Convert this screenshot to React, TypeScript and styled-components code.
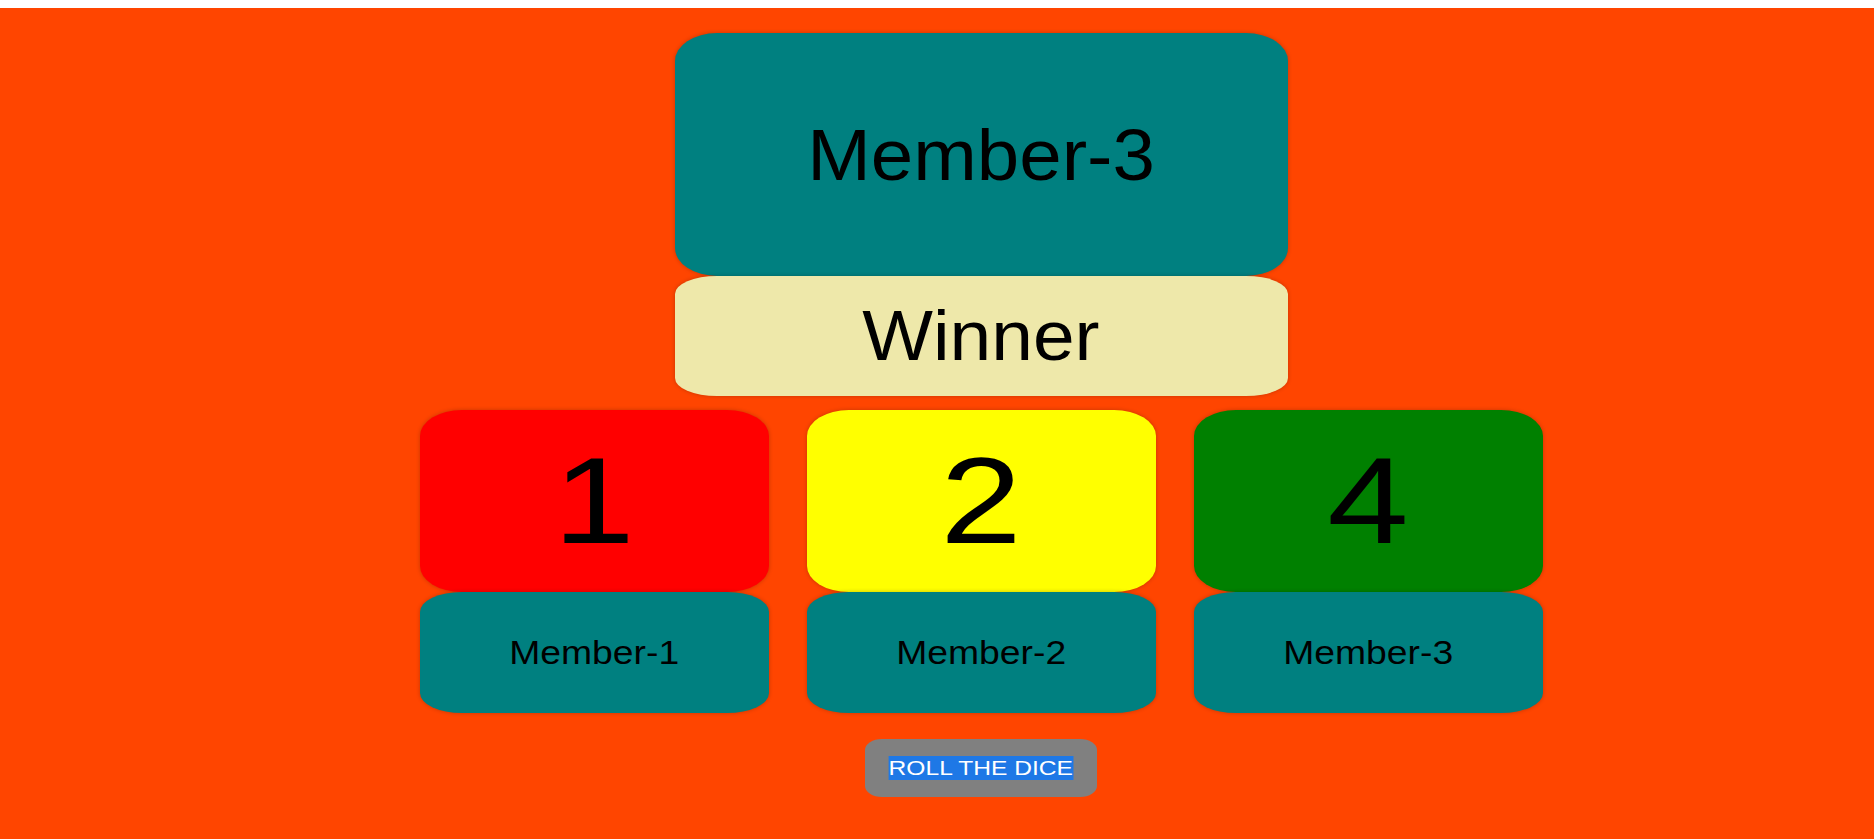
import React from "react";
import styled, { createGlobalStyle } from "styled-components";

const Global = createGlobalStyle`
  html, body { margin: 0; padding: 0; background: #ffffff; }
  body { font-family: "Liberation Sans", Arial, sans-serif; }
`;

const Page = styled.div`
  padding-top: 8px;
  background: #ffffff;
`;

const Stage = styled.main`
  min-height: 831px;
  background: #ff4500;
  box-sizing: border-box;
  padding: 25px 0 0 88px;
  display: flex;
  flex-direction: column;
  align-items: center;
`;

const WinnerCard = styled.section`
  width: 613px;
  display: flex;
  flex-direction: column;
`;

const Box = styled.div<{ $bg: string; $h: number; $ry: number }>`
  height: ${(p) => p.$h}px;
  background: ${(p) => p.$bg};
  border-radius: 42px / ${(p) => p.$ry}px;
  display: flex;
  align-items: center;
  justify-content: center;
  color: #000;
  box-shadow: 0 0 4px rgba(0, 0, 0, 0.22);
`;

const Label = styled.span<{ $size: number; $sx?: number }>`
  font-size: ${(p) => p.$size}px;
  line-height: 1;
  display: inline-block;
  transform: scaleX(${(p) => p.$sx ?? 1});
`;

const DiceRow = styled.div`
  margin-top: 14px;
  display: flex;
  gap: 38px;
`;

const Column = styled.div`
  width: 349px;
  display: flex;
  flex-direction: column;
`;

const RollButton = styled.button`
  margin-top: 26px;
  width: 232px;
  height: 58px;
  border: none;
  background: #808080;
  border-radius: 17px / 11px;
  color: #ffffff;
  font-family: "Liberation Sans", Arial, sans-serif;
  font-size: 21px;
  display: flex;
  align-items: center;
  justify-content: center;
  padding: 0;
  cursor: pointer;
`;

const Selected = styled.span`
  display: inline-block;
  background: #1e78e6;
  color: #ffffff;
  transform: scaleX(1.17);
`;

const dice = [
  { value: 1, color: "#ff0000", name: "Member-1" },
  { value: 2, color: "#ffff00", name: "Member-2" },
  { value: 4, color: "#008000", name: "Member-3" },
];

export default function App() {
  return (
    <Page>
      <Global />
      <Stage>
        <WinnerCard>
          <Box $bg="#008080" $h={243} $ry={28}>
            <Label $size={72} $sx={1.06}>Member-3</Label>
          </Box>
          <Box $bg="#eee8aa" $h={120} $ry={18}>
            <Label $size={70} $sx={1.07}>Winner</Label>
          </Box>
        </WinnerCard>
        <DiceRow>
          {dice.map((d) => (
            <Column key={d.name}>
              <Box $bg={d.color} $h={182} $ry={26}>
                <Label $size={122} $sx={1.2}>{d.value}</Label>
              </Box>
              <Box $bg="#008080" $h={121} $ry={20}>
                <Label $size={33} $sx={1.13}>{d.name}</Label>
              </Box>
            </Column>
          ))}
        </DiceRow>
        <RollButton>
          <Selected>ROLL THE DICE</Selected>
        </RollButton>
      </Stage>
    </Page>
  );
}
